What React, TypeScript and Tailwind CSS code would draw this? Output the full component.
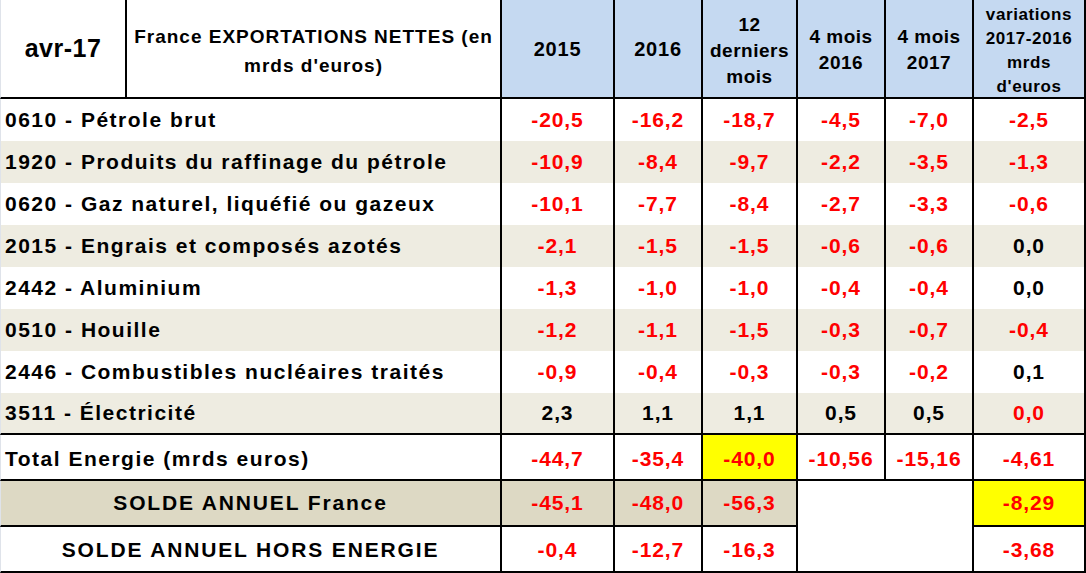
import React from "react";

type Row = {
  label: string;
  vals: string[];
  red: boolean[];
  beige: boolean;
};

const R = true;
const B = false;

const dataRows: Row[] = [
  { label: "0610 - Pétrole brut", vals: ["-20,5", "-16,2", "-18,7", "-4,5", "-7,0", "-2,5"], red: [R, R, R, R, R, R], beige: false },
  { label: "1920 - Produits du raffinage du pétrole", vals: ["-10,9", "-8,4", "-9,7", "-2,2", "-3,5", "-1,3"], red: [R, R, R, R, R, R], beige: true },
  { label: "0620 - Gaz naturel, liquéfié ou gazeux", vals: ["-10,1", "-7,7", "-8,4", "-2,7", "-3,3", "-0,6"], red: [R, R, R, R, R, R], beige: false },
  { label: "2015 - Engrais et composés azotés", vals: ["-2,1", "-1,5", "-1,5", "-0,6", "-0,6", "0,0"], red: [R, R, R, R, R, B], beige: true },
  { label: "2442 - Aluminium", vals: ["-1,3", "-1,0", "-1,0", "-0,4", "-0,4", "0,0"], red: [R, R, R, R, R, B], beige: false },
  { label: "0510 - Houille", vals: ["-1,2", "-1,1", "-1,5", "-0,3", "-0,7", "-0,4"], red: [R, R, R, R, R, R], beige: true },
  { label: "2446 - Combustibles nucléaires traités", vals: ["-0,9", "-0,4", "-0,3", "-0,3", "-0,2", "0,1"], red: [R, R, R, R, R, B], beige: false },
  { label: "3511 - Électricité", vals: ["2,3", "1,1", "1,1", "0,5", "0,5", "0,0"], red: [B, B, B, B, B, R], beige: true },
];

const font = "font-['Liberation_Sans',Arial,sans-serif]";
const num = "flex items-center justify-center text-[21px] tracking-[0.9px]";
const label = "flex items-center pl-[4px] text-[21px] tracking-[1.5px] whitespace-nowrap";
const solde = "flex items-center justify-center text-[21px] tracking-[1.85px] whitespace-nowrap";

export default function App() {
  return (
    <div className={`w-[1086px] h-[573px] bg-white overflow-hidden ${font} font-bold text-black`}>
      <div className="grid grid-cols-[127px_375px_113px_88px_95px_88px_88px_112px] grid-rows-[99px_repeat(7,42px)_42px_46px_46px_46px]">
        {/* Header */}
        <div className="border-r-2 border-b-2 border-black border-l border-l-[#dfe3ea] flex items-center justify-center text-[25px] tracking-[0.5px]">
          avr-17
        </div>
        <div className="border-r-2 border-b-2 border-black flex items-center justify-center text-center text-[19px] leading-[29px] tracking-[1px] pt-[5px]">
          <span>
            France EXPORTATIONS NETTES (en
            <br />
            mrds d'euros)
          </span>
        </div>
        <div className="border-r-2 border-b-2 border-black bg-[#c5d9f1] flex items-center justify-center text-[20px] tracking-[0.8px]">
          2015
        </div>
        <div className="border-r-2 border-b-2 border-black bg-[#c5d9f1] flex items-center justify-center text-[20px] tracking-[0.8px]">
          2016
        </div>
        <div className="border-r-2 border-b-2 border-black bg-[#c5d9f1] flex items-center justify-center text-center text-[19px] leading-[26px] tracking-[0.5px] pt-[4px]">
          <span>
            12
            <br />
            derniers
            <br />
            mois
          </span>
        </div>
        <div className="border-r-2 border-b-2 border-black bg-[#c5d9f1] flex items-center justify-center text-center text-[19px] leading-[26px] tracking-[0.5px] pt-[3px]">
          <span>
            4 mois
            <br />
            2016
          </span>
        </div>
        <div className="border-r-2 border-b-2 border-black bg-[#c5d9f1] flex items-center justify-center text-center text-[19px] leading-[26px] tracking-[0.5px] pt-[3px]">
          <span>
            4 mois
            <br />
            2017
          </span>
        </div>
        <div className="border-r-2 border-b-2 border-black bg-[#c5d9f1] flex items-center justify-center text-center text-[17px] leading-[24px] tracking-[0.6px] pt-[4px]">
          <span>
            variations
            <br />
            2017-2016
            <br />
            mrds
            <br />
            d'euros
          </span>
        </div>

        {/* Data rows */}
        {dataRows.map((row, i) => {
          const last = i === dataRows.length - 1;
          const bg = row.beige ? "bg-[#eeece1]" : "bg-white";
          const bb = last ? "border-b-2" : "";
          return (
            <React.Fragment key={row.label}>
              <div className={`col-span-2 border-r-2 ${bb} border-black border-l border-l-[#dfe3ea] ${bg} ${label}`}>
                {row.label}
              </div>
              {row.vals.map((v, j) => (
                <div
                  key={j}
                  className={`border-r-2 ${bb} border-black ${bg} ${num} ${row.red[j] ? "text-[#ff0000]" : "text-black"}`}
                >
                  {v}
                </div>
              ))}
            </React.Fragment>
          );
        })}

        {/* Total Energie */}
        <div className={`col-span-2 border-r-2 border-b-2 border-black border-l border-l-[#dfe3ea] bg-white pt-[3px] ${label}`}>
          Total Energie (mrds euros)
        </div>
        {["-44,7", "-35,4", "-40,0", "-10,56", "-15,16", "-4,61"].map((v, j) => (
          <div
            key={v}
            className={`border-r-2 border-b-2 border-black ${j === 2 ? "bg-[#ffff00]" : "bg-white"} pt-[3px] ${num} text-[#ff0000]`}
          >
            {v}
          </div>
        ))}

        {/* SOLDE ANNUEL France */}
        <div className={`col-span-2 border-r-2 border-b-2 border-black border-l border-l-[#dfe3ea] bg-[#ddd9c4] ${solde}`}>
          SOLDE ANNUEL France
        </div>
        {["-45,1", "-48,0", "-56,3"].map((v) => (
          <div key={v} className={`border-r-2 border-b-2 border-black bg-[#ddd9c4] ${num} text-[#ff0000]`}>
            {v}
          </div>
        ))}
        <div className="col-span-2 row-span-2 border-r-2 border-b-2 border-black bg-white" />
        <div className={`border-r-2 border-b-2 border-black bg-[#ffff00] ${num} text-[#ff0000]`}>-8,29</div>

        {/* SOLDE ANNUEL HORS ENERGIE */}
        <div className={`col-span-2 border-r-2 border-b-2 border-black border-l border-l-[#dfe3ea] bg-white pt-[1px] ${solde}`}>
          SOLDE ANNUEL HORS ENERGIE
        </div>
        {["-0,4", "-12,7", "-16,3"].map((v) => (
          <div key={v} className={`border-r-2 border-b-2 border-black bg-white pt-[1px] ${num} text-[#ff0000]`}>
            {v}
          </div>
        ))}
        <div className={`border-r-2 border-b-2 border-black bg-white pt-[1px] ${num} text-[#ff0000]`}>-3,68</div>
      </div>
    </div>
  );
}
